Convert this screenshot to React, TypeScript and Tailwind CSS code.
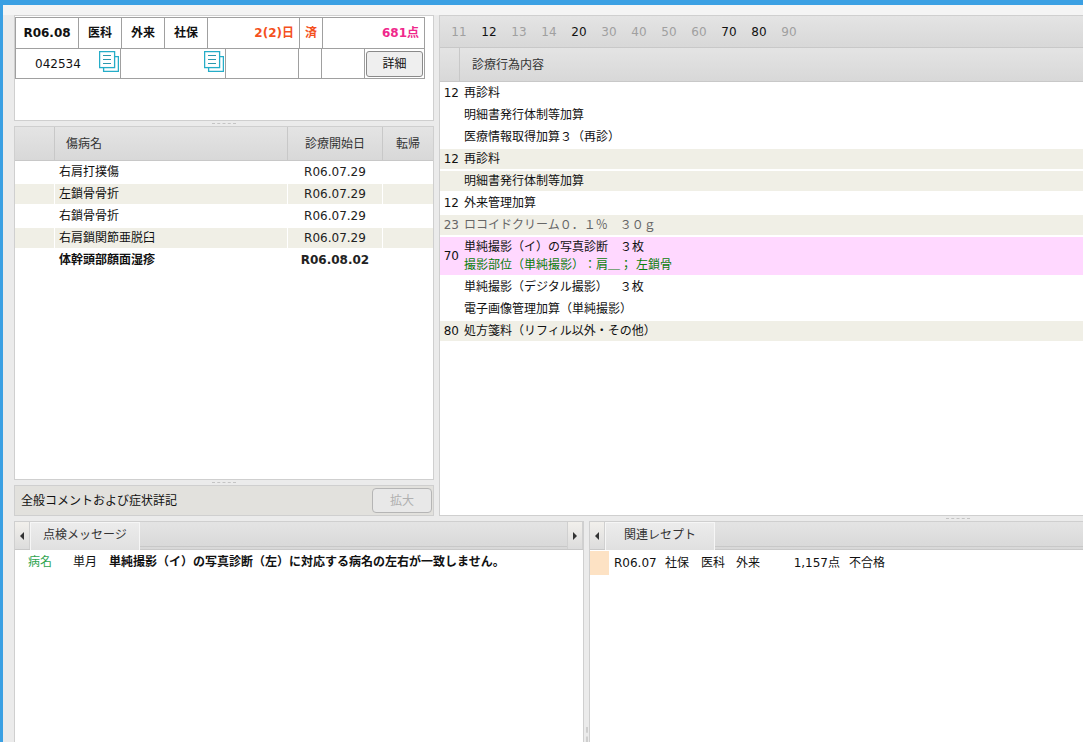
import React from "react";

const FONT = { fontFamily: '"DejaVu Sans", "Noto Sans CJK JP", sans-serif' };

const CopyIcon = () => (
  <svg width="20" height="21" viewBox="0 0 20 21" fill="none" stroke="#25adc8" strokeWidth="1.3">
    <path d="M15.5 5.6h3.9v14.8h-14.8v-3.8" />
    <rect x="0.6" y="0.6" width="15" height="16" fill="#fff" />
    <path d="M4 4.5h8M4 8.5h8M4 12.5h8" strokeWidth="1" stroke="#2c97ad" />
  </svg>
);

const Grip = () => <div className="w-6 border-t border-dashed border-[#c4c4c4]" />;

const HSplit = () => (
  <div className="h-[5px] flex items-center justify-center">
    <Grip />
  </div>
);

const headerBg = "bg-gradient-to-b from-[#e4e4e4] to-[#d8d8d8]";

const Arrow = ({ dir }: { dir: "left" | "right" }) => (
  <div className="w-[15px] h-full flex items-center justify-center bg-gradient-to-b from-[#f2f0ec] to-[#dcdcdc] border-r border-[#d0d0d0]">
    <div
      className={
        dir === "left"
          ? "w-0 h-0 border-y-[4px] border-y-transparent border-r-[4px] border-r-[#333]"
          : "w-0 h-0 border-y-[4px] border-y-transparent border-l-[4px] border-l-[#333]"
      }
    />
  </div>
);

const Tab = ({ children }: { children: React.ReactNode }) => (
  <div className="w-[110px] h-[28px] pb-[4px] flex items-center justify-center bg-gradient-to-b from-[#ececec] to-[#e0e0e0] border-x border-t border-[#f6f6f6] text-[#333]">
    {children}
  </div>
);

const TopCell = ({
  w,
  className = "",
  children,
}: {
  w: string;
  className?: string;
  children?: React.ReactNode;
}) => (
  <div className={`${w} shrink-0 border-r border-[#a0a0a0] flex items-center justify-center ${className}`}>
    {children}
  </div>
);

const diseases = [
  { name: "右肩打撲傷", date: "R06.07.29" },
  { name: "左鎖骨骨折", date: "R06.07.29", alt: true },
  { name: "右鎖骨骨折", date: "R06.07.29" },
  { name: "右肩鎖関節亜脱臼", date: "R06.07.29", alt: true },
  { name: "体幹頭部顔面湿疹", date: "R06.08.02", bold: true },
];

const codes = [
  { n: "11" },
  { n: "12", on: true },
  { n: "13" },
  { n: "14" },
  { n: "20", on: true },
  { n: "30" },
  { n: "40" },
  { n: "50" },
  { n: "60" },
  { n: "70", on: true },
  { n: "80", on: true },
  { n: "90" },
];

const acts = [
  { n: "12", t: "再診料" },
  { n: "", t: "明細書発行体制等加算" },
  { n: "", t: "医療情報取得加算３（再診）" },
  { n: "12", t: "再診料", alt: true },
  { n: "", t: "明細書発行体制等加算", alt: true },
  { n: "12", t: "外来管理加算" },
  { n: "23", t: "ロコイドクリーム０．１％　３０ｇ", alt: true, gray: true },
];

// 行ピッチは22px、色付き行は上下1pxの白を残す
const ActRow = ({ n, t, alt, gray }: { n: string; t: string; alt?: boolean; gray?: boolean }) => (
  <div className="h-[22px] py-[1px]">
    <div className={`flex items-center h-full ${alt ? "bg-[#f0efe6]" : ""} ${gray ? "text-[#666]" : "text-[#111]"}`}>
      <div className="w-[19px] text-right">{n}</div>
      <div className="ml-[5px]">{t}</div>
    </div>
  </div>
);

export default function App() {
  return (
    <div
      className="w-[1083px] h-[742px] overflow-hidden bg-[#ebebeb] border-t-[5px] border-l-[3px] border-[#3ba0e3] text-[12px] text-[#111] [text-spacing-trim:space-all]"
      style={FONT}
    >
      <div className="h-[10px] bg-[#f4f4f4]" />
      <div className="flex h-[501px] pl-[11px]">
        {/* 左カラム */}
        <div className="w-[420px] shrink-0 flex flex-col">
          <div className="h-[106px] shrink-0 bg-white border border-[#cfcfcf] pt-[1px]">
            <div className="w-[410px] border border-[#a0a0a0]">
              <div className="flex h-[31px] border-b border-[#a0a0a0] font-bold text-[12px]">
                <TopCell w="w-[63px]">R06.08</TopCell>
                <TopCell w="w-[43px]">医科</TopCell>
                <TopCell w="w-[43px]">外来</TopCell>
                <TopCell w="w-[43px]">社保</TopCell>
                <TopCell w="w-[92px]" className="!justify-end pr-[5px] text-[#f4511e]">2(2)日</TopCell>
                <TopCell w="w-[23px]" className="text-[#f4511e]">済</TopCell>
                <div className="flex-1 flex items-center justify-end pr-[5px] text-[#f0288c]">681点</div>
              </div>
              <div className="flex h-[29px]">
                <TopCell w="w-[105px]" className="!justify-start relative">
                  <span className="ml-[19px]">042534</span>
                  <span className="absolute left-[83px] top-[2px]"><CopyIcon /></span>
                </TopCell>
                <TopCell w="w-[105px]" className="relative">
                  <span className="absolute left-[83px] top-[2px]"><CopyIcon /></span>
                </TopCell>
                <TopCell w="w-[73px]" />
                <TopCell w="w-[23px]" />
                <TopCell w="w-[43px]" />
                <div className="flex-1 flex items-center justify-center">
                  <button className="w-[57px] h-[26px] bg-[#efefef] border border-[#8a8a8a] rounded-[3px] text-[12px]">詳細</button>
                </div>
              </div>
            </div>
          </div>
          <HSplit />
          <div className="flex-1 min-h-0 bg-white border border-[#cfcfcf]">
            <div className={`flex h-[34px] border-b border-[#c8c8c8] text-[#333] ${headerBg}`}>
              <div className="w-[40px] border-r border-[#c8c8c8]" />
              <div className="w-[233px] border-r border-[#c8c8c8] flex items-center pl-[11px]">傷病名</div>
              <div className="w-[95px] border-r border-[#c8c8c8] flex items-center justify-center">診療開始日</div>
              <div className="flex-1 flex items-center justify-center">転帰</div>
            </div>
            {diseases.map((d) => (
              <div key={d.name} className="h-[22px] py-[1px]">
                <div className={`flex items-center h-full ${d.alt ? "bg-[#f0efe6]" : ""} ${d.bold ? "font-bold" : ""}`}>
                  <div className="w-[40px] h-full border-r border-white" />
                  <div className="w-[233px] h-full flex items-center pl-[4px] border-r border-white">{d.name}</div>
                  <div className="w-[95px] h-full flex items-center justify-center border-r border-white text-[#222]">{d.date}</div>
                  <div className="flex-1" />
                </div>
              </div>
            ))}
          </div>
          <HSplit />
          <div className="h-[31px] shrink-0 flex items-center justify-between pl-[6px] pr-[1px] bg-[#e2e1dd] border border-[#cfcfcf]">
            <span>全般コメントおよび症状詳記</span>
            <button className="w-[60px] h-[25px] bg-[#e8e8e8] border border-[#b5b5b5] rounded-[4px] text-[#b0b0b0]">拡大</button>
          </div>
        </div>

        {/* 右カラム */}
        <div className="ml-[5px] w-[700px] shrink-0 bg-white border border-[#cfcfcf]">
          <div className={`flex items-center h-[32px] pl-[4px] border-b border-[#c8c8c8] ${headerBg}`}>
            {codes.map((c) => (
              <div key={c.n} className={`w-[30px] text-center ${c.on ? "text-[#111]" : "text-[#a0a0a0]"}`}>
                {c.n}
              </div>
            ))}
          </div>
          <div className={`flex h-[34px] border-b border-[#c8c8c8] text-[#333] ${headerBg}`}>
            <div className="w-[20px] border-r border-[#c8c8c8]" />
            <div className="flex items-center pl-[12px]">診療行為内容</div>
          </div>
          {acts.map((a, i) => (
            <ActRow key={i} {...a} />
          ))}
          <div className="h-[40px] py-[1px]">
            <div className="flex items-center h-full bg-[#ffd8ff]">
              <div className="w-[19px] text-right">70</div>
              <div className="ml-[5px] leading-[18px]">
                <div>単純撮影（イ）の写真診断　３枚</div>
                <div className="text-[#0a7d0a]">
                  撮影部位（単純撮影）：肩＿；<span className="ml-[4px]">左鎖骨</span>
                </div>
              </div>
            </div>
          </div>
          <ActRow n="" t="単純撮影（デジタル撮影）　３枚" />
          <ActRow n="" t="電子画像管理加算（単純撮影）" />
          <ActRow n="80" t="処方箋料（リフィル以外・その他）" alt />
        </div>
      </div>

      <div className="h-[5px] flex items-center justify-end pr-[113px]">
        <Grip />
      </div>

      <div className="flex h-[221px] pl-[11px]">
        <div className="w-[570px] shrink-0 bg-white border border-[#cfcfcf] border-b-0">
          <div className={`flex h-[28px] border-b border-[#c8c8c8] ${headerBg}`}>
            <Arrow dir="left" />
            <Tab>点検メッセージ</Tab>
            <div className="flex-1 h-[25px] border-b border-[#c8c8c8]" />
            <div className="border-l border-[#d0d0d0]">
              <Arrow dir="right" />
            </div>
          </div>
          <div className="flex items-center h-[24px] pl-[13px]">
            <span className="w-[45px] text-[#2ea44f]">病名</span>
            <span className="w-[36px]">単月</span>
            <span className="font-bold">単純撮影（イ）の写真診断（左）に対応する病名の左右が一致しません。</span>
          </div>
        </div>
        <div className="w-[5px] shrink-0 flex flex-col justify-end items-center">
          <div className="h-[15px] border-l-2 border-dashed border-[#cfcfcf]" />
        </div>
        <div className="w-[500px] shrink-0 bg-white border border-[#cfcfcf] border-b-0">
          <div className={`flex h-[28px] border-b border-[#c8c8c8] ${headerBg}`}>
            <Arrow dir="left" />
            <Tab>関連レセプト</Tab>
            <div className="flex-1 h-[25px] border-b border-[#c8c8c8]" />
          </div>
          <div className="flex items-center h-[24px] mt-[1px]">
            <div className="w-[19px] h-full bg-[#fde2c4]" />
            <span className="ml-[5px] w-[51px]">R06.07</span>
            <span className="w-[36px]">社保</span>
            <span className="w-[35px]">医科</span>
            <span className="w-[35px]">外来</span>
            <span className="w-[69px] text-right">1,157点</span>
            <span className="ml-[9px]">不合格</span>
          </div>
        </div>
      </div>
    </div>
  );
}
